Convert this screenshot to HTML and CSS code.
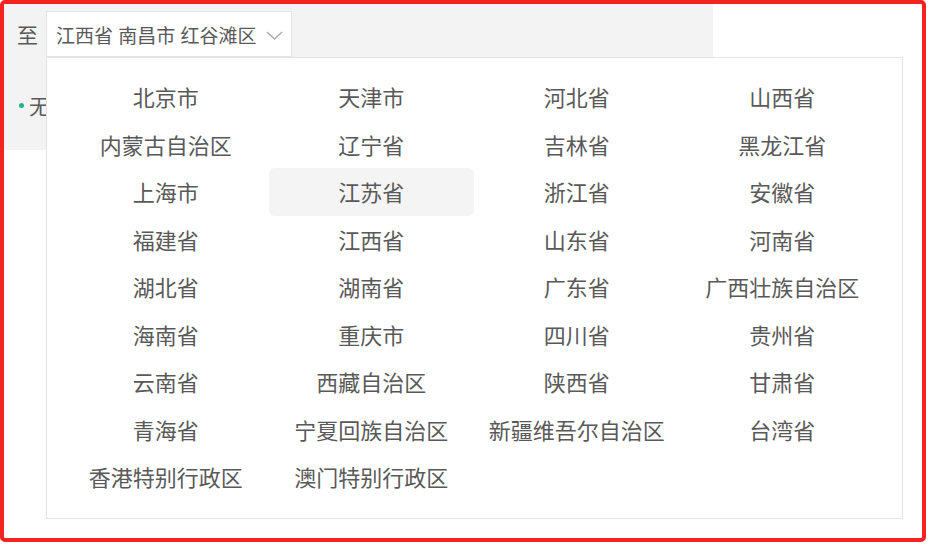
FILE: index.html
```html
<!DOCTYPE html>
<html>
<head>
	<meta charset="utf-8">
	<link rel="stylesheet" href="styles.css">
</head>
<body>
	<div class="frame">
		<div class="panel">
			<div class="line">
				<span class="label">至</span>
				<div class="select">
					<span class="value">江西省 南昌市 红谷滩区</span>
					<svg class="arrow" width="17" height="9" viewBox="0 0 17 9">
						<path d="M1 1 L8.5 8 L16 1" fill="none" stroke="#aaa" stroke-width="1.3"/>
					</svg>
				</div>
			</div>
			<div class="line note">
				<span class="dot"></span>
				<span>无</span>
			</div>
			<div class="dropdown">
				<div class="item">北京市</div>
				<div class="item">天津市</div>
				<div class="item">河北省</div>
				<div class="item">山西省</div>
				<div class="item">内蒙古自治区</div>
				<div class="item">辽宁省</div>
				<div class="item">吉林省</div>
				<div class="item">黑龙江省</div>
				<div class="item">上海市</div>
				<div class="item hover">江苏省</div>
				<div class="item">浙江省</div>
				<div class="item">安徽省</div>
				<div class="item">福建省</div>
				<div class="item">江西省</div>
				<div class="item">山东省</div>
				<div class="item">河南省</div>
				<div class="item">湖北省</div>
				<div class="item">湖南省</div>
				<div class="item">广东省</div>
				<div class="item">广西壮族自治区</div>
				<div class="item">海南省</div>
				<div class="item">重庆市</div>
				<div class="item">四川省</div>
				<div class="item">贵州省</div>
				<div class="item">云南省</div>
				<div class="item">西藏自治区</div>
				<div class="item">陕西省</div>
				<div class="item">甘肃省</div>
				<div class="item">青海省</div>
				<div class="item">宁夏回族自治区</div>
				<div class="item">新疆维吾尔自治区</div>
				<div class="item">台湾省</div>
				<div class="item">香港特别行政区</div>
				<div class="item">澳门特别行政区</div>
			</div>
		</div>
	</div>
</body>
</html>
```

FILE: styles.css
```css
html, body {
	margin: 0;
	padding: 0;
	background-color: #fff;
	color: #595959;
	font-family: "Noto Sans CJK SC", "Noto Sans", sans-serif;
}
.frame {
	width: 918px;
	height: 534px;
	border: 4px solid #f52222;
	border-radius: 5px;
	position: relative;
}
.panel {
	width: 709px;
	height: 146px;
	background-color: #f3f3f3;
	padding: 7px 0 0 13px;
	box-sizing: border-box;
	position: relative;
}
.line {
	display: flex;
	align-items: center;
	gap: 8px;
}
.label {
	font-size: 21px;
	line-height: 46px;
}
.select {
	width: 246px;
	height: 46px;
	box-sizing: border-box;
	background-color: #fff;
	border: 1px solid #e4e4e4;
	display: flex;
	align-items: center;
	padding-left: 9px;
	gap: 9px;
}
.value {
	font-size: 19px;
	word-spacing: 1px;
	white-space: nowrap;
}
.arrow {
	display: block;
	margin-top: 2px;
}
.note {
	margin-top: 35px;
	gap: 5px;
	font-size: 21px;
	line-height: 26px;
}
.dot {
	width: 5px;
	height: 5px;
	margin-left: 2px;
	border-radius: 50%;
	background-color: #22b38a;
}
.dropdown {
	position: absolute;
	left: 42px;
	top: 53px;
	width: 857px;
	box-sizing: border-box;
	padding: 15px 17px 17px 16px;
	background-color: #fff;
	border: 1px solid #e2e2e2;
	display: grid;
	grid-template-columns: repeat(4, 1fr);
	grid-auto-rows: 47.5px;
}
.item {
	font-size: 22px;
	line-height: 46px;
	text-align: center;
	border-radius: 6px;
	white-space: nowrap;
}
.item.hover {
	background-color: #f4f4f4;
}
```
